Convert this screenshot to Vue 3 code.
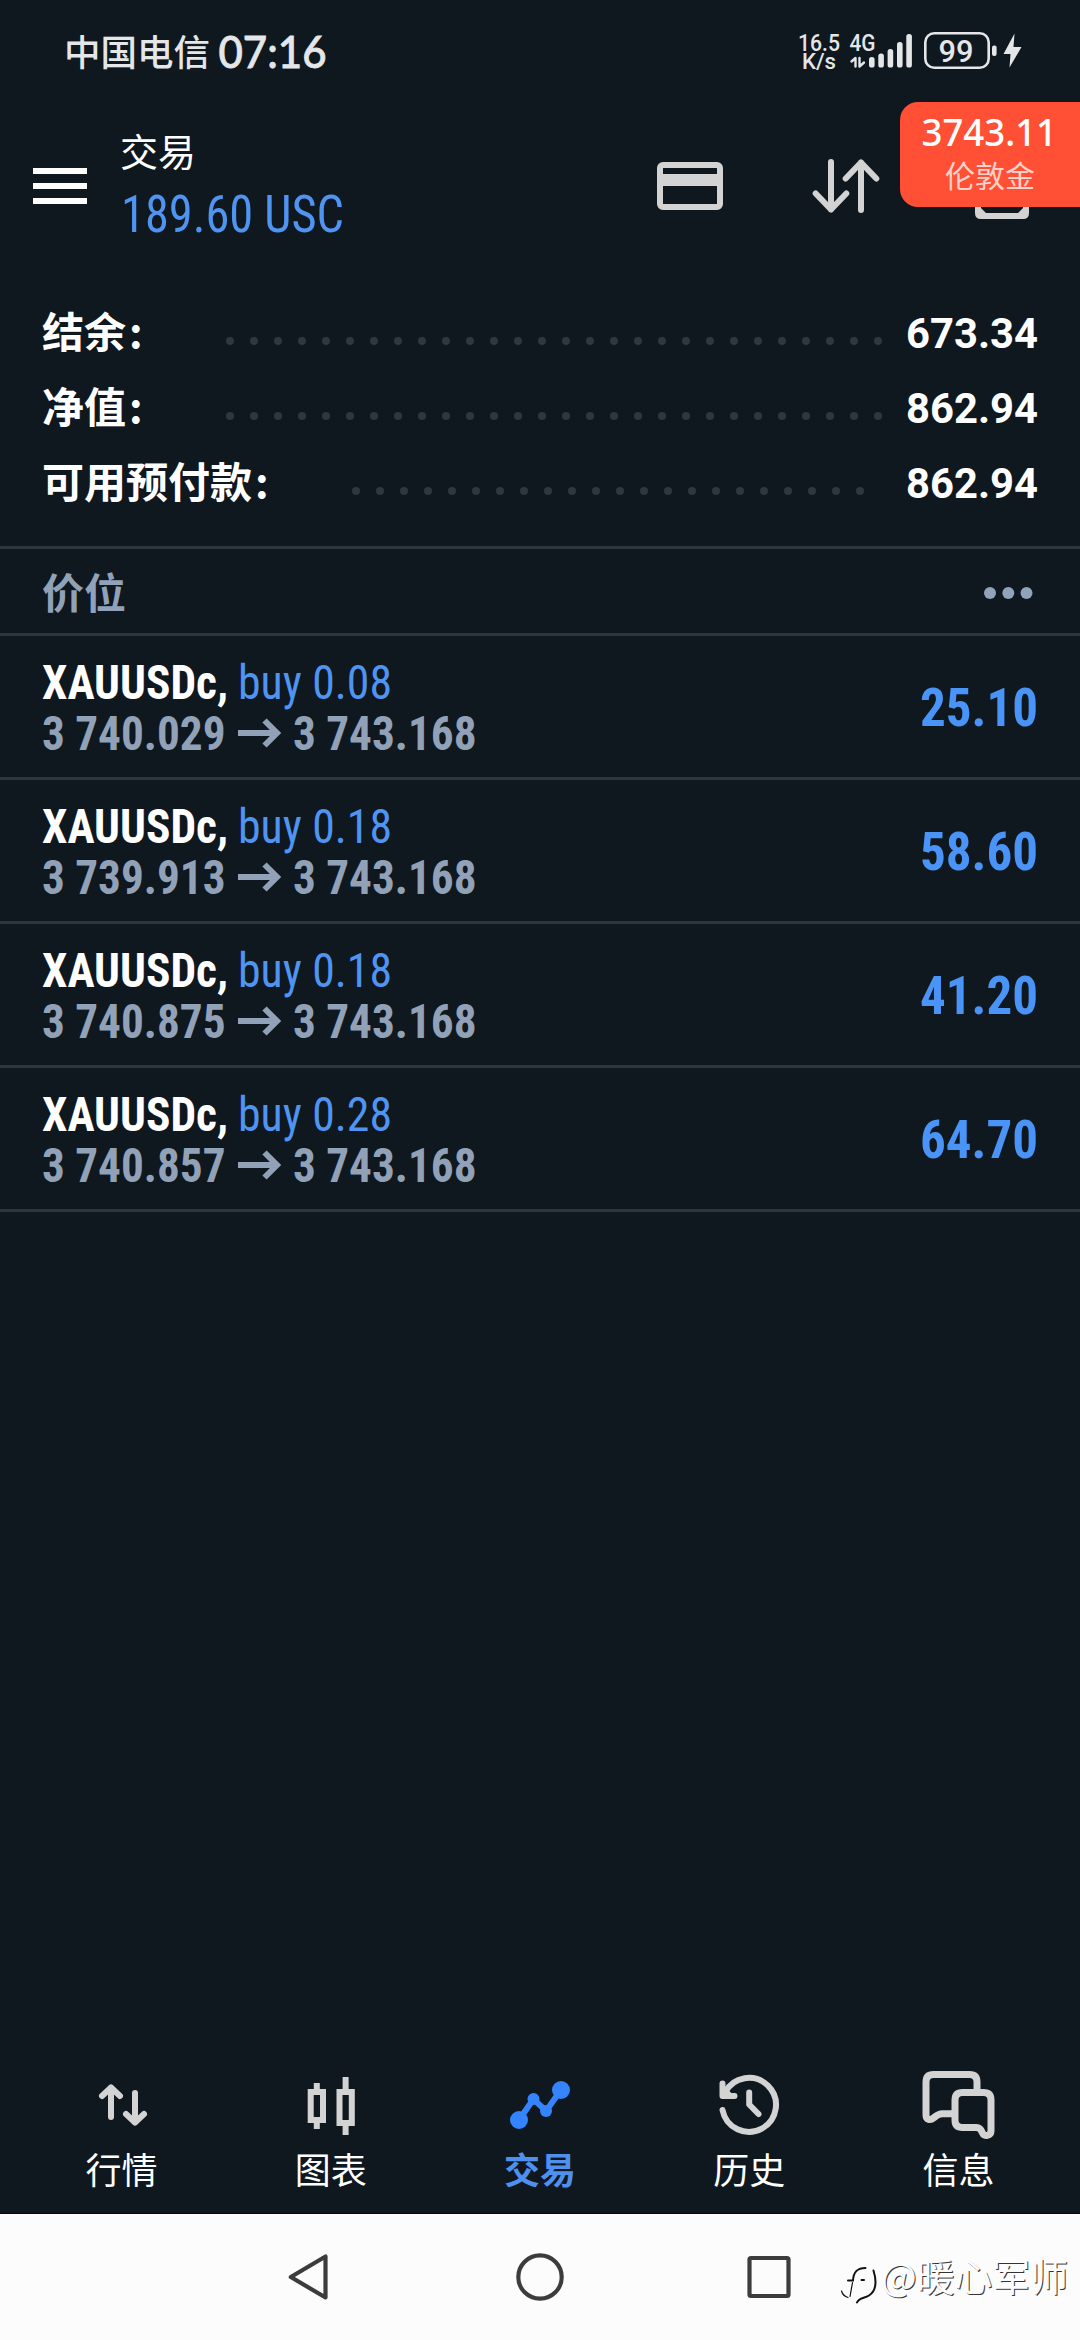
<script setup>
const summary = [
  { label: '结余', value: '673.34', start: 230, count: 28 },
  { label: '净值', value: '862.94', start: 230, count: 28 },
  { label: '可用预付款', value: '862.94', start: 356, count: 22 },
]

const positions = [
  { symbol: 'XAUUSDc,', side: 'buy 0.08', open: '3 740.029', now: '3 743.168', profit: '25.10' },
  { symbol: 'XAUUSDc,', side: 'buy 0.18', open: '3 739.913', now: '3 743.168', profit: '58.60' },
  { symbol: 'XAUUSDc,', side: 'buy 0.18', open: '3 740.875', now: '3 743.168', profit: '41.20' },
  { symbol: 'XAUUSDc,', side: 'buy 0.28', open: '3 740.857', now: '3 743.168', profit: '64.70' },
]

const signal = [
  { x: 869, y: 57 },
  { x: 878.3, y: 53.5 },
  { x: 887.6, y: 49 },
  { x: 897, y: 42 },
  { x: 906.3, y: 34 },
]
</script>

<template>
  <div class="screen">
    <header class="status">
      <span class="carrier">中国电信</span>
      <svg class="clock" width="110" height="50" viewBox="218 26 110 50">
        <text x="218.500" y="68" font-size="44.500" textLength="108" lengthAdjust="spacingAndGlyphs">07:16</text>
      </svg>
      <svg class="indicators" width="232" height="50" viewBox="794 26 232 50" fill="#e4e6e8">
        <g class="tiny">
          <text x="798" y="50.5" font-size="23" textLength="42" lengthAdjust="spacingAndGlyphs">16.5</text>
          <text x="802" y="69" font-size="22.5" textLength="34" lengthAdjust="spacingAndGlyphs">K/s</text>
          <text x="849.5" y="51" font-size="23" textLength="26" lengthAdjust="spacingAndGlyphs">4G</text>
        </g>
        <path d="M851.5 61.5 855.5 58V66.5M859.5 58V66.5L864 62.5" fill="none" stroke="#e4e6e8" stroke-width="2.4" stroke-linejoin="round" stroke-linecap="round" />
        <rect v-for="b in signal" :key="b.x" :x="b.x" :y="b.y" width="5.6" :height="67.5 - b.y" rx="2.6" />
        <rect x="925.3" y="33.3" width="63.4" height="34.4" rx="9" fill="none" stroke="#e4e6e8" stroke-width="2.6" />
        <text class="tiny" x="938.5" y="62" font-size="31" textLength="35" lengthAdjust="spacingAndGlyphs">99</text>
        <rect x="992" y="45.5" width="4.6" height="10.5" rx="2" />
        <path d="M1014.5 33.5 1003.5 54H1010.5L1009.5 67.5 1021.5 47H1013.5Z" />
      </svg>
    </header>

    <header class="appbar">
      <svg class="menu" width="54" height="36" viewBox="0 0 54 36" fill="#fff">
        <path d="M0 0H54V6H0ZM0 15H54V21H0ZM0 30H54V36H0Z" />
      </svg>
      <div class="heading">
        <h1>交易</h1>
        <svg width="230" height="50" viewBox="120 190 230 50">
          <text class="cond head-value" x="121" y="232" font-size="51" fill="#4f94f0" textLength="223" lengthAdjust="spacingAndGlyphs">189.60 USC</text>
        </svg>
      </div>
      <svg class="tools" width="424" height="70" viewBox="656 154 424 70" fill="none" stroke="#d3d3d3" stroke-width="6">
        <rect x="660" y="165" width="60" height="42" rx="3" />
        <path d="M658 180H722" stroke-width="12" />
        <g stroke-linecap="round" stroke-linejoin="round">
          <path d="M831 162V209.500M815.700 193.500 831 209.500 846.300 193.500" />
          <path d="M861 210V162.500M845.700 178.500 861 162.500 876.300 178.500" />
        </g>
        <path d="M978 170V213Q978 216 981 216H1023Q1026 216 1026 213V170" />
        <path d="M980 207 987 214H980ZM1024 207 1017 214H1024Z" fill="#d3d3d3" stroke="none" />
      </svg>
      <aside class="quote">
        <svg width="180" height="50" viewBox="900 104 180 50">
          <text x="921.500" y="146" font-size="37.500" textLength="135.500" lengthAdjust="spacingAndGlyphs">3743.11</text>
        </svg>
        <span>伦敦金</span>
      </aside>
    </header>

    <section class="summary">
      <div v-for="row in summary" :key="row.label" class="sum-row">
        <b class="sum-label">{{ row.label }}<i>:</i></b>
        <svg class="leader" width="680" height="10" viewBox="210 0 680 10" fill="#2f3741">
          <circle v-for="n in row.count" :key="n" :cx="row.start + (n - 1) * 24" cy="5" r="4" />
        </svg>
        <svg width="134" height="40" viewBox="904 0 134 40">
          <text class="bold" x="906" y="35" font-size="42" fill="#fff" textLength="132" lengthAdjust="spacingAndGlyphs">{{ row.value }}</text>
        </svg>
      </div>
    </section>

    <section class="section-head">
      <b>价位</b>
      <svg width="49" height="12" viewBox="0 0 49 12" fill="#91a3bb">
        <circle cx="6" cy="6" r="6" /><circle cx="24.300" cy="6" r="6" /><circle cx="42.500" cy="6" r="6" />
      </svg>
    </section>

    <ul class="positions">
      <li v-for="p in positions" :key="p.open">
        <svg width="1080" height="141" viewBox="0 0 1080 141" class="cond">
          <text class="bold" x="42" y="63" font-size="48" fill="#fff" textLength="186" lengthAdjust="spacingAndGlyphs">{{ p.symbol }}</text>
          <text x="238" y="63" font-size="48" fill="#4f94f0" textLength="154" lengthAdjust="spacingAndGlyphs">{{ p.side }}</text>
          <g class="bold" fill="#91a1b7">
            <text x="42" y="114" font-size="48" textLength="183.500" lengthAdjust="spacingAndGlyphs">{{ p.open }}</text>
            <text x="293" y="114" font-size="48" textLength="183.500" lengthAdjust="spacingAndGlyphs">{{ p.now }}</text>
          </g>
          <path d="M238 97H276M264.500 84.500 277 97 264.500 109.500" fill="none" stroke="#91a1b7" stroke-width="6" />
          <text class="bold" x="920" y="90" font-size="54" fill="#4a94f8" textLength="118" lengthAdjust="spacingAndGlyphs">{{ p.profit }}</text>
        </svg>
      </li>
    </ul>

    <nav class="tabs">
      <a>
        <svg width="80" height="74" viewBox="81 2068 80 74" fill="none" stroke="#d3d3d3" stroke-width="6" stroke-linecap="round" stroke-linejoin="round">
          <path d="M110 2118V2088.500M101 2097 110 2088.500 119 2097M134 2094V2123.500M125 2115 134 2123.500 143 2115" />
        </svg>
        <span>行情</span>
      </a>
      <a>
        <svg width="80" height="74" viewBox="291 2068 80 74" fill="none" stroke="#d3d3d3" stroke-width="6">
          <path d="M310.700 2093H323V2121H310.700ZM316.800 2084V2091M316.800 2123V2130M339.500 2093H351.800V2124H339.500ZM345.600 2078V2091M345.600 2126V2136" />
        </svg>
        <span>图表</span>
      </a>
      <a class="active">
        <svg width="80" height="74" viewBox="500 2068 80 74" fill="#3484ff">
          <path d="M519 2121 533.500 2100 546 2112 561 2091" fill="none" stroke="#3484ff" stroke-width="6" />
          <circle cx="519" cy="2121" r="9" /><circle cx="533.500" cy="2100" r="6" />
          <circle cx="546" cy="2112" r="6" /><circle cx="561" cy="2091" r="9" />
        </svg>
        <span>交易</span>
      </a>
      <a>
        <svg width="80" height="74" viewBox="708.500 2068 80 74" fill="none" stroke="#d3d3d3" stroke-width="6" stroke-linecap="round" stroke-linejoin="round">
          <path d="M722 2111A27 27 0 1 0 724.500 2093.500" />
          <path d="M722 2084.500V2097.500H734Z" fill="#d3d3d3" stroke="none" />
          <path d="M722 2084.500V2097H734M748.700 2093.500V2105.500L758 2115" />
        </svg>
        <span>历史</span>
      </a>
      <a>
        <svg width="80" height="74" viewBox="917.500 2068 80 74" fill="none" stroke="#d3d3d3" stroke-width="7" stroke-linejoin="round">
          <path d="M976.500 2092V2083Q976.500 2075.500 969 2075.500H933Q925.500 2075.500 925.500 2083V2116C925.500 2121 930 2121.500 933 2119C936 2116.500 938.500 2114.800 942 2114.800H954" />
          <path d="M962 2093.500H983Q990.500 2093.500 990.500 2101V2132C990.500 2137 983.500 2138 982 2134Q980 2128.500 976 2128.500H962Q954.500 2128.500 954.500 2121V2101Q954.500 2093.500 962 2093.500Z" />
        </svg>
        <span>信息</span>
      </a>
    </nav>

    <footer class="sysnav">
      <svg width="510" height="60" viewBox="285 2247 510 60" fill="none" stroke="#3c3c3c" stroke-width="4.200" stroke-linejoin="round">
        <path d="M290.800 2277 325.500 2256.500V2297.500Z" />
        <circle cx="540" cy="2277" r="21.700" />
        <rect x="749.500" y="2258" width="39" height="38" rx="1.500" />
      </svg>
      <div class="mark">
        <svg width="40" height="44" viewBox="838 2255 40 44" fill="none" stroke="#111" stroke-width="2" stroke-linecap="round">
          <path d="M848 2280.500H853C853.500 2272 857 2268 865.500 2268" />
          <path d="M852.500 2282.500 850 2296.500M841.500 2291Q843 2296 848 2297.500" stroke-width="1.200" />
          <path d="M873.500 2270.500C877 2282 876 2291 869 2295.500C864 2298.500 859 2297.500 857 2302.500M861.500 2280H864" />
        </svg>
        <span>@暖心军师</span>
      </div>
    </footer>
  </div>
</template>

<style>
body { margin: 0; background: #0f171f; }
</style>

<style scoped>
.screen {
  width: 1080px;
  height: 2340px;
  display: flex;
  flex-direction: column;
  background: #0f171f;
  color: #fff;
  font-family: Roboto, "Noto Sans CJK SC", sans-serif;
  overflow: hidden;
}
svg { display: block; flex: none; overflow: visible; }
.cond { font-stretch: 75%; }
.head-value { font-weight: 450; }
.bold { font-weight: 700; }

.status {
  height: 76px;
  padding: 26px 54px 0 64px;
  box-sizing: border-box;
  display: flex;
  color: #e4e6e8;
}
.carrier { font: 500 36.5px/49px "Noto Sans CJK SC", sans-serif; width: 154px; white-space: nowrap; }
.clock { fill: #e4e6e8; stroke: #e4e6e8; stroke-width: 0.8px; font-family: Lato, sans-serif; font-weight: 500; }
.indicators { margin-left: auto; }
.tiny { font-weight: 500; }

.appbar { height: 189px; display: flex; position: relative; }
.menu { margin: 92px 0 0 33px; }
.heading { margin: 47px 0 0 33px; }
h1 { margin: 0; font: 400 38px/54px "Noto Sans CJK SC", sans-serif; height: 67px; }
.tools { margin: 78px 0 0 auto; }
.quote {
  position: absolute;
  top: 26px;
  right: 0;
  width: 180px;
  height: 105px;
  border-radius: 18px 0 0 18px;
  background: #ff5036;
  display: flex;
  flex-direction: column;
  font-family: "Noto Sans", sans-serif;
  font-weight: 500;
}
.quote svg { fill: #fff; margin-top: 2px; }
.quote span { font: 400 30px/44px "Noto Sans CJK SC", sans-serif; margin: -2px 0 0 45px; color: #ffd2c9; }

.summary { height: 281px; padding: 30px 42px 0; box-sizing: border-box; }
.sum-row { height: 75px; display: flex; align-items: center; }
.sum-label { font: 700 42px/70px "Noto Sans CJK SC", sans-serif; height: 75px; width: 168px; white-space: nowrap; }
.sum-label i { font-style: normal; margin-left: 3px; }
.leader { margin: 16px 14px 0 0; }

.section-head {
  height: 90px;
  box-sizing: border-box;
  border: solid #2d353f;
  border-width: 3px 0;
  padding: 0 47px 0 42px;
  display: flex;
  align-items: center;
  justify-content: space-between;
  font: 500 42px/60px "Noto Sans CJK SC", sans-serif;
  color: #91a1b7;
}
.section-head svg { margin-top: 3px; }
.positions { margin: 0; padding: 0; list-style: none; }
.positions li { height: 141px; border-bottom: 3px solid #2d353f; }

.tabs {
  margin-top: auto;
  height: 146px;
  padding: 0 17px;
  display: flex;
  border-bottom: 1px solid #04080d;
}
.tabs a { flex: 1; display: flex; flex-direction: column; align-items: center; }
.tabs span { font: 400 36px/54px "Noto Sans CJK SC", sans-serif; }
.tabs .active span { color: #4f90ee; font-weight: 700; }

.sysnav { height: 126px; background: #fcfcfc; display: flex; align-items: center; padding-left: 285px; }
.mark { display: flex; align-items: center; margin-left: 43px; }
.mark span {
  margin: -5px 0 0 3px;
  font: 400 37.8px/60px "Noto Sans CJK SC", sans-serif;
  white-space: nowrap;
  color: #fcfcfc;
  text-shadow: 1px 1px 0 #333;
}
</style>
